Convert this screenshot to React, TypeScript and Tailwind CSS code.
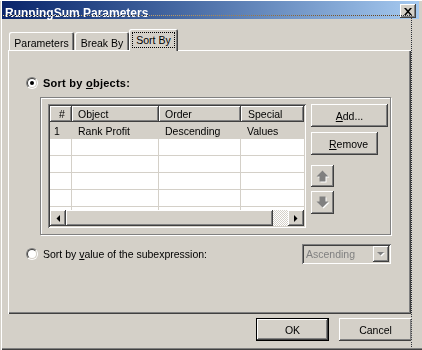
import React from "react";

const raised =
  "shadow-[inset_-1px_-1px_0_#404040,inset_1px_1px_0_#fff,inset_-2px_-2px_0_#808080,inset_2px_2px_0_#d4d0c8]";
const sunken =
  "shadow-[inset_1px_1px_0_#808080,inset_-1px_-1px_0_#fff,inset_2px_2px_0_#404040,inset_-2px_-2px_0_#d4d0c8]";
const headRaised = "shadow-[inset_-1px_-1px_0_#404040,inset_1px_1px_0_#fff,inset_-2px_-2px_0_#808080]";

const rows = [
  { n: "1", object: "Rank Profit", order: "Descending", special: "Values" },
  { n: "", object: "", order: "", special: "" },
  { n: "", object: "", order: "", special: "" },
  { n: "", object: "", order: "", special: "" },
  { n: "", object: "", order: "", special: "" },
  { n: "", object: "", order: "", special: "" },
];

function Radio({ checked = false }: { checked?: boolean }) {
  return (
    <span className="w-[12px] h-[12px] shrink-0 rounded-full border border-[#808080] border-r-white border-b-white">
      <span className="w-full h-full rounded-full border border-[#404040] border-r-[#d4d0c8] border-b-[#d4d0c8] bg-white flex items-center justify-center">
        {checked ? <span className="w-[4px] h-[4px] rounded-full bg-black" /> : null}
      </span>
    </span>
  );
}

function BlockArrow({ down = false }: { down?: boolean }) {
  const pts = down ? "3,0 9,0 9,5 12,5 6,11 0,5 3,5" : "6,0 12,6 9,6 9,11 3,11 3,6 0,6";
  return (
    <svg width="14" height="13" viewBox="0 0 14 13">
      <polygon points={pts} fill="#fff" transform="translate(1.5 1.5)" />
      <polygon points={pts} fill="#808080" transform="translate(0.5 0.5)" />
    </svg>
  );
}

function Button({ children, className }: { children: React.ReactNode; className: string }) {
  return <div className={`${raised} bg-[#d4d0c8] flex items-center ${className}`}>{children}</div>;
}

export default function App() {
  return (
    <div className="w-[422px] h-[350px] bg-[#d4d0c8] relative overflow-hidden flex flex-col font-['Liberation_Sans',Arial,sans-serif] text-[10.5px] leading-[12px] text-black shadow-[inset_0_1px_0_#fff,inset_1px_0_0_#d4d0c8,inset_2px_0_0_#fff,inset_0_-1px_0_#404040,inset_0_-2px_0_#808080]">
      {/* title bar */}
      <div className="mt-[1px] ml-[2px] mr-[3px] h-[18px] shrink-0 bg-linear-to-r from-[#0a246a] to-[#a6caf0] flex items-center">
        <span className="self-end pl-[3px] text-white font-bold text-[12px] leading-[12px] whitespace-nowrap">
          RunningSum Parameters
        </span>
        <div className={`${raised} ml-auto mr-[3px] mt-[2px] w-[16px] h-[14px] bg-[#d4d0c8] flex items-center justify-center`}>
          <svg width="8" height="7" viewBox="0 0 8 7">
            <path d="M0 0h2l2 2.3 2-2.3h2l-3 3.5 3 3.5h-2l-2-2.3-2 2.3h-2l3-3.5z" fill="#000" />
          </svg>
        </div>
      </div>

      {/* tabs */}
      <div className="mt-[10px] ml-[9px] h-[21px] shrink-0 flex items-end">
        <div className="w-[65px] h-[18px] rounded-t-[2px] shadow-[inset_1px_1px_0_#fff,inset_-1px_0_0_#404040,inset_-2px_0_0_#808080] flex justify-center pt-[5px]">
          Parameters
        </div>
        <div className="ml-[1px] w-[54px] h-[18px] rounded-t-[2px] shadow-[inset_1px_1px_0_#fff,inset_-1px_0_0_#404040,inset_-2px_0_0_#808080] flex justify-center pt-[5px]">
          Break By
        </div>
        <div className="relative z-10 -mb-[1px] w-[49px] h-[22px] rounded-t-[2px] bg-[#d4d0c8] shadow-[inset_1px_1px_0_#fff,inset_-1px_0_0_#404040,inset_-2px_0_0_#808080] pt-[3px] px-[3px]">
          <div className="h-[16px] border border-dotted border-black flex justify-center pt-[1px]">Sort By</div>
        </div>
      </div>

      {/* tab panel */}
      <div className="ml-[8px] w-[403px] h-[264px] shrink-0 shadow-[inset_1px_1px_0_#fff,inset_-1px_-1px_0_#404040,inset_-2px_-2px_0_#808080] flex flex-col pl-[18px] pt-[27px]">
        <div className="h-[12px] flex items-center">
          <Radio checked />
          <span className="ml-[5px] font-bold text-[11px] tracking-[0.25px]">
            Sort by <u>o</u>bjects:
          </span>
        </div>

        <div className="mt-[8px] ml-[14px] w-[351px] h-[138px] border border-[#808080] shadow-[inset_1px_1px_0_#fff,1px_1px_0_#fff] flex pl-[7px] pt-[6px]">
          {/* list */}
          <div className={`${sunken} w-[258px] h-[124px] bg-white p-[2px] flex flex-col`}>
            <div className="h-[16px] shrink-0 flex bg-[#d4d0c8]">
              <div className={`${headRaised} w-[22px] pl-[9px] pt-[2px]`}>#</div>
              <div className={`${headRaised} w-[87px] pl-[6px] pt-[2px]`}>Object</div>
              <div className={`${headRaised} w-[82px] pl-[6px] pt-[2px]`}>Order</div>
              <div className={`${headRaised} w-[63px] pl-[7px] pt-[2px] whitespace-nowrap overflow-hidden`}>Special</div>
            </div>
            <div className="flex-1 overflow-hidden">
              {rows.map((r, i) => (
                <div
                  key={i}
                  className={`h-[17px] flex border-b border-[#d4d0c8] ${i === 0 ? "bg-[#d4d0c8]" : "bg-white"}`}
                >
                  <div className="w-[22px] pl-[4px] pt-[3px] border-r border-[#d4d0c8]">{r.n}</div>
                  <div className="w-[87px] pl-[6px] pt-[3px] border-r border-[#d4d0c8]">{r.object}</div>
                  <div className="w-[82px] pl-[6px] pt-[3px] border-r border-[#d4d0c8]">{r.order}</div>
                  <div className="w-[63px] pl-[6px] pt-[3px]">{r.special}</div>
                </div>
              ))}
            </div>
            {/* horizontal scrollbar */}
            <div className="h-[16px] shrink-0 flex">
              <div className={`${raised} w-[16px] h-[16px] bg-[#d4d0c8] flex items-center justify-center`}>
                <svg width="4" height="7" viewBox="0 0 4 7">
                  <polygon points="4,0 4,7 0.5,3.5" fill="#000" />
                </svg>
              </div>
              <div className={`${raised} flex-1 bg-[#d4d0c8]`} />
              <div className="w-[15px] bg-[repeating-conic-gradient(#d4d0c8_0_25%,#fff_0_50%)] bg-[length:2px_2px]" />
              <div className={`${raised} w-[16px] h-[16px] bg-[#d4d0c8] flex items-center justify-center`}>
                <svg width="4" height="7" viewBox="0 0 4 7">
                  <polygon points="0,0 0,7 3.5,3.5" fill="#000" />
                </svg>
              </div>
            </div>
          </div>

          {/* side buttons */}
          <div className="ml-[5px] flex flex-col">
            <Button className="w-[77px] h-[23px] justify-center">
              <span>
                <u>A</u>dd...
              </span>
            </Button>
            <Button className="mt-[5px] w-[67px] h-[23px] pl-[18px]">
              <span>
                <u>R</u>emove
              </span>
            </Button>
            <Button className="mt-[10px] w-[23px] h-[22px] justify-center">
              <BlockArrow />
            </Button>
            <Button className="mt-[4px] w-[23px] h-[23px] justify-center">
              <BlockArrow down />
            </Button>
          </div>
        </div>

        <div className="mt-[9px] w-[365px] h-[20px] flex items-center">
          <Radio />
          <span className="ml-[5px] whitespace-nowrap">
            Sort by <u>v</u>alue of the subexpression:
          </span>
          <div className={`${sunken} ml-auto w-[89px] h-[20px] bg-[#d4d0c8] p-[2px] flex items-center`}>
            <span className="pl-[2px] text-[#808080]">Ascending</span>
            <div className={`${raised} ml-auto w-[16px] h-[16px] bg-[#d4d0c8] flex items-center justify-center`}>
              <svg width="8" height="5" viewBox="0 0 8 5">
                <polygon points="1,1 8,1 4.5,4.5" fill="#fff" />
                <polygon points="0,0 7,0 3.5,3.5" fill="#808080" />
              </svg>
            </div>
          </div>
        </div>
      </div>

      {/* dialog buttons */}
      <div className="mt-[4px] pr-[10px] flex justify-end gap-[10px]">
        <div className="w-[73px] h-[23px] border border-black">
          <Button className="w-full h-full justify-center">OK</Button>
        </div>
        <Button className="w-[73px] h-[23px] justify-center">Cancel</Button>
      </div>

      {/* focus marquee */}
      <div className="absolute left-[3px] top-[15px] w-[409px] h-[340px] border-t border-r border-dotted border-white mix-blend-difference pointer-events-none" />
    </div>
  );
}
